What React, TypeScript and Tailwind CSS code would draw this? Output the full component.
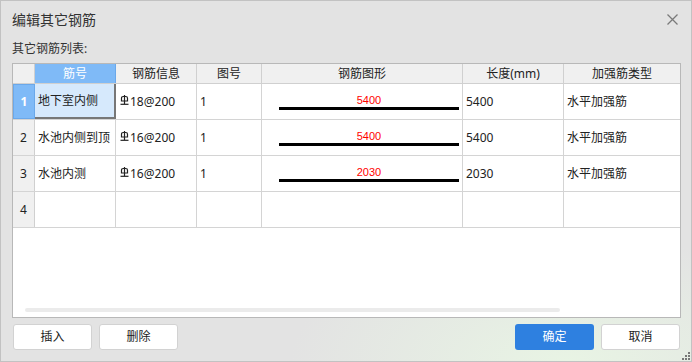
const rows = [
  { no: "1", name: "地下室内侧", dia: "18@200", fig: "1", len: "5400", type: "水平加强筋" },
  { no: "2", name: "水池内侧到顶", dia: "16@200", fig: "1", len: "5400", type: "水平加强筋" },
  { no: "3", name: "水池内测", dia: "16@200", fig: "1", len: "2030", type: "水平加强筋" },
];

const cols = "grid grid-cols-[22px_81px_81px_65px_201px_101px_116px]";

function RebarMark() {
  return (
    <svg width="9" height="10" viewBox="0 0 9 10" className="mr-[1px] -mt-[4px] shrink-0" fill="none" stroke="#222" strokeWidth="1.2">
      <path d="M1.5 6 V3.2 Q1.5 1.5 3.2 1.5 H5.8 Q7.5 1.5 7.5 3.2 V6 Z" />
      <path d="M4.5 0 V9" />
      <path d="M0.5 9.3 H8.5" />
    </svg>
  );
}

function Button({ label, primary }: { label: string; primary?: boolean }) {
  return (
    <button
      className={`h-[26px] w-[79px] rounded-[3px] text-[12px] ${
        primary ? "bg-[#2e80e0] text-white" : "border border-[#d2d2d2] bg-white text-[#222]"
      }`}
    >
      {label}
    </button>
  );
}

export default function App() {
  return (
    <div
      className="relative flex h-[362px] w-[692px] flex-col border border-[#c2c2c2] bg-[radial-gradient(ellipse_40%_35%_at_82%_100%,#e8f4e4_0%,#e3e3e3_100%)] text-[#222]"
      style={{ fontFamily: "'Noto Sans','Noto Sans CJK SC',sans-serif" }}
    >
      <div className="flex h-[36px] items-center justify-between pl-[11px] pr-[13px]">
        <span className="text-[14px] text-[#333]">编辑其它钢筋</span>
        <svg width="11" height="11" viewBox="0 0 11 11" stroke="#7a7a7a" strokeWidth="1.3">
          <path d="M0.5 0.5 L10.5 10.5 M10.5 0.5 L0.5 10.5" />
        </svg>
      </div>
      <div className="mt-[4px] flex h-[16px] items-center pl-[11px] text-[12px] text-[#333]">其它钢筋列表:</div>

      <div className="ml-[11px] mt-[6px] flex h-[255px] w-[669px] flex-col border border-[#b8b8b8] bg-white">
        <div className={`${cols} h-[20px] border-b border-[#d0d0d0] bg-[#f0f0f0] text-[12px]`}>
          <div className="border-r border-[#d0d0d0]" />
          <div className="flex items-center justify-center border-r border-[#6aa8ea] bg-[#7fbaf7] text-white">筋号</div>
          <div className="flex items-center justify-center border-r border-[#d0d0d0]">钢筋信息</div>
          <div className="flex items-center justify-center border-r border-[#d0d0d0]">图号</div>
          <div className="flex items-center justify-center border-r border-[#d0d0d0]">钢筋图形</div>
          <div className="flex items-center justify-center border-r border-[#d0d0d0]">长度(mm)</div>
          <div className="flex items-center justify-center">加强筋类型</div>
        </div>

        {rows.map((r, i) => {
          const sel = i === 0;
          return (
            <div key={r.no} className={`${cols} h-[36px] border-b border-[#d4d4d4] text-[12px]`}>
              <div
                className={`flex items-center justify-center ${
                  sel ? "border border-[#6aa8ea] bg-[#7fbaf7] font-bold text-white" : "border-r border-[#d0d0d0] bg-[#f0f0f0]"
                }`}
              >
                {r.no}
              </div>
              <div
                className={`flex items-center pl-[3px] ${
                  sel ? "border-b-2 border-r-2 border-[#777] bg-[#d6e9fc]" : "border-r border-[#d4d4d4]"
                }`}
              >
                {r.name}
              </div>
              <div className="flex items-center border-r border-[#d4d4d4] pl-[4px]">
                <RebarMark />
                {r.dia}
              </div>
              <div className="flex items-center border-r border-[#d4d4d4] pl-[3px]">{r.fig}</div>
              <div className="flex items-end border-r border-[#d4d4d4] pb-[9px] pl-[17px] pr-[3px]">
                <div className="flex w-full flex-col items-center">
                  <span className="text-[11px] leading-[12px] text-[#ff0000]" style={{ fontFamily: "'Liberation Sans',sans-serif" }}>
                    {r.len}
                  </span>
                  <div className="mt-[1px] h-[3px] w-full bg-black" />
                </div>
              </div>
              <div className="flex items-center border-r border-[#d4d4d4] pl-[3px]">{r.len}</div>
              <div className="flex items-center pl-[3px]">{r.type}</div>
            </div>
          );
        })}

        <div className={`${cols} h-[36px] border-b border-[#d4d4d4] text-[12px]`}>
          <div className="flex items-center justify-center border-r border-[#d0d0d0] bg-[#f0f0f0]">4</div>
          <div className="border-r border-[#d4d4d4]" />
          <div className="border-r border-[#d4d4d4]" />
          <div className="border-r border-[#d4d4d4]" />
          <div className="border-r border-[#d4d4d4]" />
          <div className="border-r border-[#d4d4d4]" />
          <div />
        </div>

        <div className="flex-1" />
        <div className="mb-[5px] ml-[12px] h-[4px] w-[535px] rounded-full bg-[#ebebeb]" />
      </div>

      <div className="mt-[6px] flex items-center pl-[12px] pr-[11px]">
        <div className="flex gap-[7px]">
          <Button label="插入" />
          <Button label="删除" />
        </div>
        <div className="ml-auto flex gap-[7px]">
          <Button label="确定" primary />
          <Button label="取消" />
        </div>
      </div>

      <svg className="absolute bottom-[1px] right-[1px]" width="8" height="8" viewBox="0 0 8 8" fill="#777">
        <rect x="6" y="0" width="2" height="2" />
        <rect x="3" y="3" width="2" height="2" />
        <rect x="6" y="3" width="2" height="2" />
        <rect x="0" y="6" width="2" height="2" />
        <rect x="3" y="6" width="2" height="2" />
        <rect x="6" y="6" width="2" height="2" />
      </svg>
    </div>
  );
}
